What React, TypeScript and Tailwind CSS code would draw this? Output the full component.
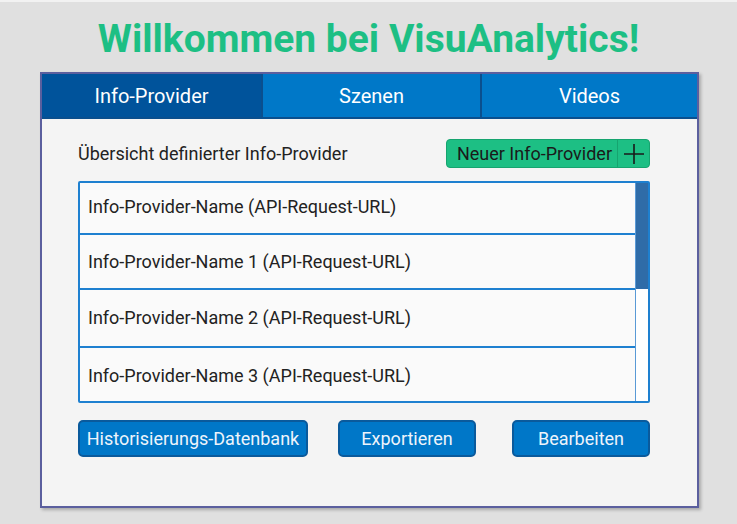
import React from 'react';

const rows = [
  'Info-Provider-Name (API-Request-URL)',
  'Info-Provider-Name 1 (API-Request-URL)',
  'Info-Provider-Name 2 (API-Request-URL)',
  'Info-Provider-Name 3 (API-Request-URL)',
];

const rowHeights = ['h-[52px] pb-[3px]', 'h-[55px]', 'h-[58px] pb-[2px]', 'h-[54px]'];

export default function App() {
  return (
    <div className="h-[524px] w-[737px] overflow-hidden bg-[#e0e0e0] font-['Roboto',sans-serif] border-t-2 border-[#f2f2f2]">
      <h1 className="pt-[11px] text-center text-[39px] font-bold leading-[52px] text-[#1dbf84]">
        Willkommen bei VisuAnalytics!
      </h1>

      <div className="ml-[40px] mt-[7px] w-[659px] h-[436px] border-2 border-[#5b5f9e] bg-[#f4f4f4] shadow-[2px_2px_3px_rgba(0,0,0,0.25)] flex flex-col">
        {/* Tabs */}
        <div className="flex h-[45px] border-b-2 border-[#0a4f8e] bg-[#0078c8]">
          <div className="flex w-[219px] items-center justify-center bg-[#00539b] text-[20px] text-white">
            Info-Provider
          </div>
          <div className="flex w-[221px] items-center justify-center border-x-2 border-[#0a4f8e] text-[20px] text-white">
            Szenen
          </div>
          <div className="flex flex-1 items-center justify-center text-[20px] text-white">
            Videos
          </div>
        </div>

        <div className="flex flex-1 flex-col pl-[36px] pr-[47px]">
          <div className="mt-[20px] flex items-center justify-between">
            <span className="text-[18px] text-[#222]">Übersicht definierter Info-Provider</span>
            <button className="flex h-[29px] items-stretch rounded-[4px] border border-[#16a46f] bg-[#1dbf84] text-[18px] text-[#1a1a1a]">
              <span className="flex items-center pl-[10px] pr-[5px]">Neuer Info-Provider</span>
              <span className="flex w-[32px] items-center justify-center border-l border-[#16a46f]">
                <svg width="22" height="22" viewBox="0 0 22 22" fill="none" stroke="#1a1a1a" strokeWidth="1.6">
                  <path d="M11 1v20M1 11h20" />
                </svg>
              </span>
            </button>
          </div>

          {/* List */}
          <div className="mt-[13px] flex h-[222px] border-2 border-[#1e80d0] bg-[#fafafa] rounded-[2px]">
            <div className="flex flex-1 flex-col overflow-hidden">
              {rows.map((r, i) => (
                <div
                  key={r}
                  className={`${rowHeights[i]} shrink-0 flex items-center pl-[8px] text-[18px] text-[#222] ${i < rows.length - 1 ? 'border-b-2 border-[#1e80d0]' : ''}`}
                >
                  {r}
                </div>
              ))}
            </div>
            <div className="w-[13px] border-l border-[#5a9ad6] bg-white">
              <div className="h-[106px] bg-[#2f6ca8]" />
            </div>
          </div>

          {/* Buttons */}
          <div className="mt-[17px] flex items-center">
            <button className="flex h-[37px] w-[230px] items-center justify-center rounded-[5px] border-2 border-[#0a5a9c] bg-[#0077c8] text-[18px] text-[#eef4fb]">
              Historisierungs-Datenbank
            </button>
            <button className="ml-[30px] flex h-[37px] w-[138px] items-center justify-center rounded-[5px] border-2 border-[#0a5a9c] bg-[#0077c8] text-[18px] text-[#eef4fb]">
              Exportieren
            </button>
            <button className="ml-auto flex h-[37px] w-[138px] items-center justify-center rounded-[5px] border-2 border-[#0a5a9c] bg-[#0077c8] text-[18px] text-[#eef4fb]">
              Bearbeiten
            </button>
          </div>
        </div>
      </div>
    </div>
  );
}
